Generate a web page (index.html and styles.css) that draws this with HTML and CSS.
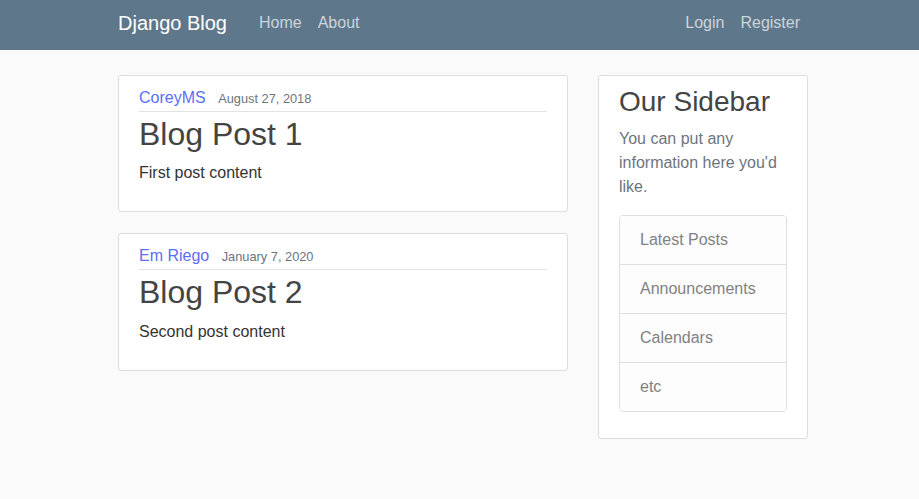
FILE: index.html
```html
<!DOCTYPE html>
<html lang="en">
<head>
<meta charset="utf-8">
<title>Django Blog</title>
<link rel="stylesheet" href="styles.css">
</head>
<body>
<header class="site-header">
  <nav class="navbar">
    <div class="container nav-inner">
      <a class="brand" href="#">Django Blog</a>
      <div class="nav-left">
        <a class="nav-link" href="#">Home</a>
        <a class="nav-link" href="#">About</a>
      </div>
      <div class="nav-right">
        <a class="nav-link" href="#">Login</a>
        <a class="nav-link" href="#">Register</a>
      </div>
    </div>
  </nav>
</header>
<main class="container main">
  <div class="col-main">
    <article class="content-section post">
      <div class="article-metadata">
        <a class="author" href="#">CoreyMS</a>
        <small class="muted">August 27, 2018</small>
      </div>
      <h2 class="article-title">Blog Post 1</h2>
      <p class="article-content">First post content</p>
    </article>
    <article class="content-section post">
      <div class="article-metadata">
        <a class="author" href="#">Em Riego</a>
        <small class="muted">January 7, 2020</small>
      </div>
      <h2 class="article-title">Blog Post 2</h2>
      <p class="article-content">Second post content</p>
    </article>
  </div>
  <aside class="col-side">
    <div class="content-section">
      <h3 class="side-title">Our Sidebar</h3>
      <p class="side-text">You can put any information here you'd like.</p>
      <ul class="list-group">
        <li class="list-item">Latest Posts</li>
        <li class="list-item">Announcements</li>
        <li class="list-item">Calendars</li>
        <li class="list-item">etc</li>
      </ul>
    </div>
  </aside>
</main>
</body>
</html>
```
FILE: styles.css
```css
* { box-sizing: border-box; }
html, body { margin: 0; padding: 0; }
body {
  background: #fafafa;
  color: #333333;
  font-family: "Liberation Sans", Arial, sans-serif;
  font-size: 16px;
  line-height: 1.5;
}
a { text-decoration: none; }
.container {
  width: 690px;
  margin-left: 118px;
}
.navbar {
  background-color: #5f778a;
  height: 50px;
  display: flex;
  align-items: center;
  padding-bottom: 5px;
}
.nav-inner {
  display: flex;
  align-items: center;
}
.brand {
  color: #ffffff;
  font-size: 20px;
  line-height: 30px;
  padding: 5px 0;
  margin-right: 24px;
}
.nav-left, .nav-right { display: flex; }
.nav-left { flex: 1; }
.nav-link {
  color: #cbd5db;
  padding: 8px 8px;
  line-height: 24px;
}
.main {
  display: flex;
  gap: 30px;
  padding-top: 25px;
}
.col-main { width: 450px; }
.col-side { width: 210px; }
.content-section {
  background: #ffffff;
  padding: 10px 20px;
  border: 1px solid #dddddd;
  border-radius: 3px;
  margin-bottom: 20px;
}
.post { margin-bottom: 21px; }
.article-metadata {
  padding-bottom: 1px;
  margin-bottom: 4px;
  border-bottom: 1px solid #e3e3e3;
}
.author {
  color: #5a6ef7;
  margin-right: 8px;
}
.muted { color: #6c757d; font-size: 12.8px; }
h2, h3 { font-weight: 500; color: #444444; margin: 0 0 8px; line-height: 1.2; }
.article-title { font-size: 32px; line-height: 37.4px; }
.article-content { margin: 0 0 16px; }
.side-title { font-size: 28px; line-height: 32.6px; }
.side-text { color: #6c757d; margin: 0 0 16px; }
.list-group {
  list-style: none;
  margin: 0 0 16px;
  padding: 0;
  border: 1px solid #dfdfdf;
  border-radius: 4px;
  overflow: hidden;
}
.list-item {
  background: #fdfdfe;
  color: #818182;
  padding: 12px 20px;
  border-top: 1px solid #dfdfdf;
}
.list-item:first-child { border-top: none; }
```
